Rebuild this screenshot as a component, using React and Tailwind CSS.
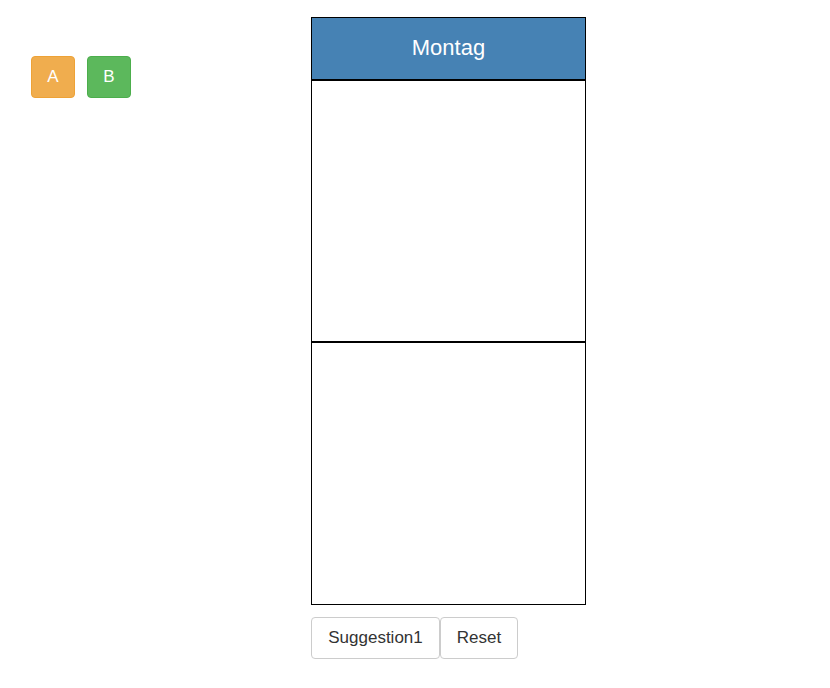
export default function App() {
  const font = { fontFamily: '"Liberation Sans", Arial, sans-serif' };
  return (
    <div className="min-h-[688px] w-[830px] bg-white pt-[17px] pl-[31px] flex items-start" style={font}>
      <div className="mt-[39px] flex gap-[12px]">
        <div className="w-[44px] h-[42px] rounded-[4px] bg-[#f0ad4e] border border-[#eea236] text-white text-[17px] flex items-center justify-center">A</div>
        <div className="w-[44px] h-[42px] rounded-[4px] bg-[#5cb85c] border border-[#4cae4c] text-white text-[17px] flex items-center justify-center">B</div>
      </div>
      <div className="ml-[180px] flex flex-col">
        <div className="w-[275px] border border-black flex flex-col">
          <div className="h-[58px] pb-[3px] bg-[#4682b4] border-b-2 border-black box-content text-white text-[22px] flex items-center justify-center">Montag</div>
          <div className="h-[260px] border-b-2 border-black box-content"></div>
          <div className="h-[261px]"></div>
        </div>
        <div className="mt-[12px] flex">
          <button className="w-[129px] h-[42px] rounded-[4px] border border-[#ccc] bg-white text-[#333] text-[17px] flex items-center justify-center">Suggestion1</button>
          <button className="w-[78px] h-[42px] rounded-[4px] border border-[#ccc] bg-white text-[#333] text-[17px] flex items-center justify-center">Reset</button>
        </div>
      </div>
    </div>
  );
}
